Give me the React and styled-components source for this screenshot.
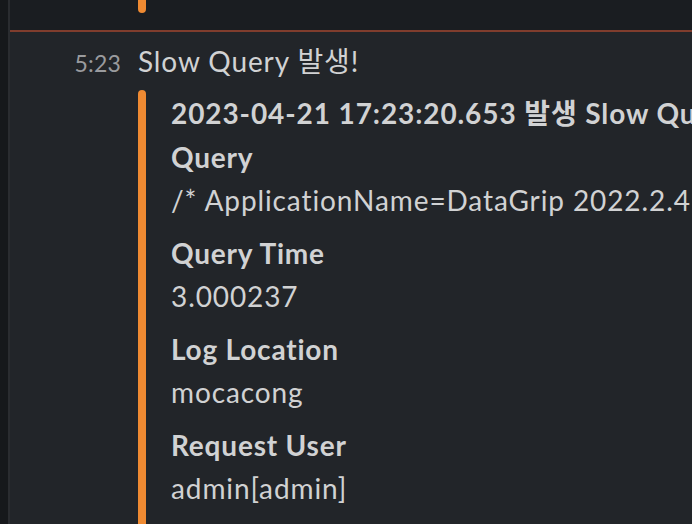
import React from "react";
import styled, { createGlobalStyle } from "styled-components";

const Global = createGlobalStyle`
  html, body { margin: 0; padding: 0; background: #1a1d21; }
  body { font-family: Lato, "Noto Sans CJK KR", sans-serif; }
  #root { width: 692px; height: 524px; overflow: hidden; }
`;

const Page = styled.div`
  display: flex;
  width: 692px;
  height: 524px;
  overflow: hidden;
  background: #1a1d21;
`;

const Rail = styled.div`
  flex: 0 0 8px;
  background: #16181b;
  border-right: 2px solid #2a2c30;
`;

const Main = styled.div`
  flex: 1;
  min-width: 0;
  display: flex;
  flex-direction: column;
  overflow: hidden;
`;

const PrevMessage = styled.div`
  flex: 0 0 30px;
  background: #1a1d21;
  padding-left: 128px;
`;

const BarStub = styled.div`
  width: 8px;
  height: 13px;
  background: #ef8a32;
  border-radius: 0 0 4px 4px;
`;

const Divider = styled.div`
  flex: 0 0 2px;
  background: #803d2d;
`;

const Message = styled.div`
  flex: 1 0 auto;
  background: #222529;
  padding-top: 11px;
  display: grid;
  grid-template-columns: 111px 1fr;
  column-gap: 17px;
  align-items: baseline;
`;

const Time = styled.span`
  justify-self: end;
  font-size: 23px;
  letter-spacing: 0.2px;
  color: #9a9b9e;
  line-height: 36px;
`;

const Body = styled.div`
  min-width: 0;
  overflow: hidden;
`;

const Text = styled.div`
  font-size: 28px;
  letter-spacing: 0.9px;
  line-height: 36px;
  color: #d1d2d3;
  white-space: nowrap;
`;

const Attachment = styled.div`
  margin-top: 11px;
  display: flex;
  align-items: stretch;
`;

const Bar = styled.div`
  flex: 0 0 8px;
  background: #ef8a32;
  border-radius: 4px 4px 0 0;
`;

const AttachBody = styled.div`
  padding: 2px 0 0 25px;
  display: flex;
  flex-direction: column;
  gap: 10px;
  white-space: nowrap;
  color: #d1d2d3;
  font-size: 28px;
  letter-spacing: 0.9px;
  line-height: 43px;
`;

const Title = styled.div`
  font-weight: 700;
  margin-bottom: -9px;
`;

const Field = styled.div`
  display: flex;
  flex-direction: column;
`;

const Label = styled.div`
  font-weight: 700;
  letter-spacing: 0.8px;
`;

const Value = styled.div`
  font-weight: 400;
`;

const fields = [
  ["Query", "/* ApplicationName=DataGrip 2022.2.4 */ SELECT SLEEP(3)"],
  ["Query Time", "3.000237"],
  ["Log Location", "mocacong"],
  ["Request User", "admin[admin]"],
  ["Request Host", "localhost"],
];

export default function App() {
  return (
    <>
      <Global />
      <Page>
        <Rail />
        <Main>
          <PrevMessage>
            <BarStub />
          </PrevMessage>
          <Divider />
          <Message>
            <Time>5:23</Time>
            <Body>
              <Text>Slow Query 발생!</Text>
              <Attachment>
                <Bar />
                <AttachBody>
                  <Title>2023-04-21 17:23:20.653 발생 Slow Query 알림</Title>
                  {fields.map(([l, v]) => (
                    <Field key={l}>
                      <Label>{l}</Label>
                      <Value>{v}</Value>
                    </Field>
                  ))}
                </AttachBody>
              </Attachment>
            </Body>
          </Message>
        </Main>
      </Page>
    </>
  );
}
